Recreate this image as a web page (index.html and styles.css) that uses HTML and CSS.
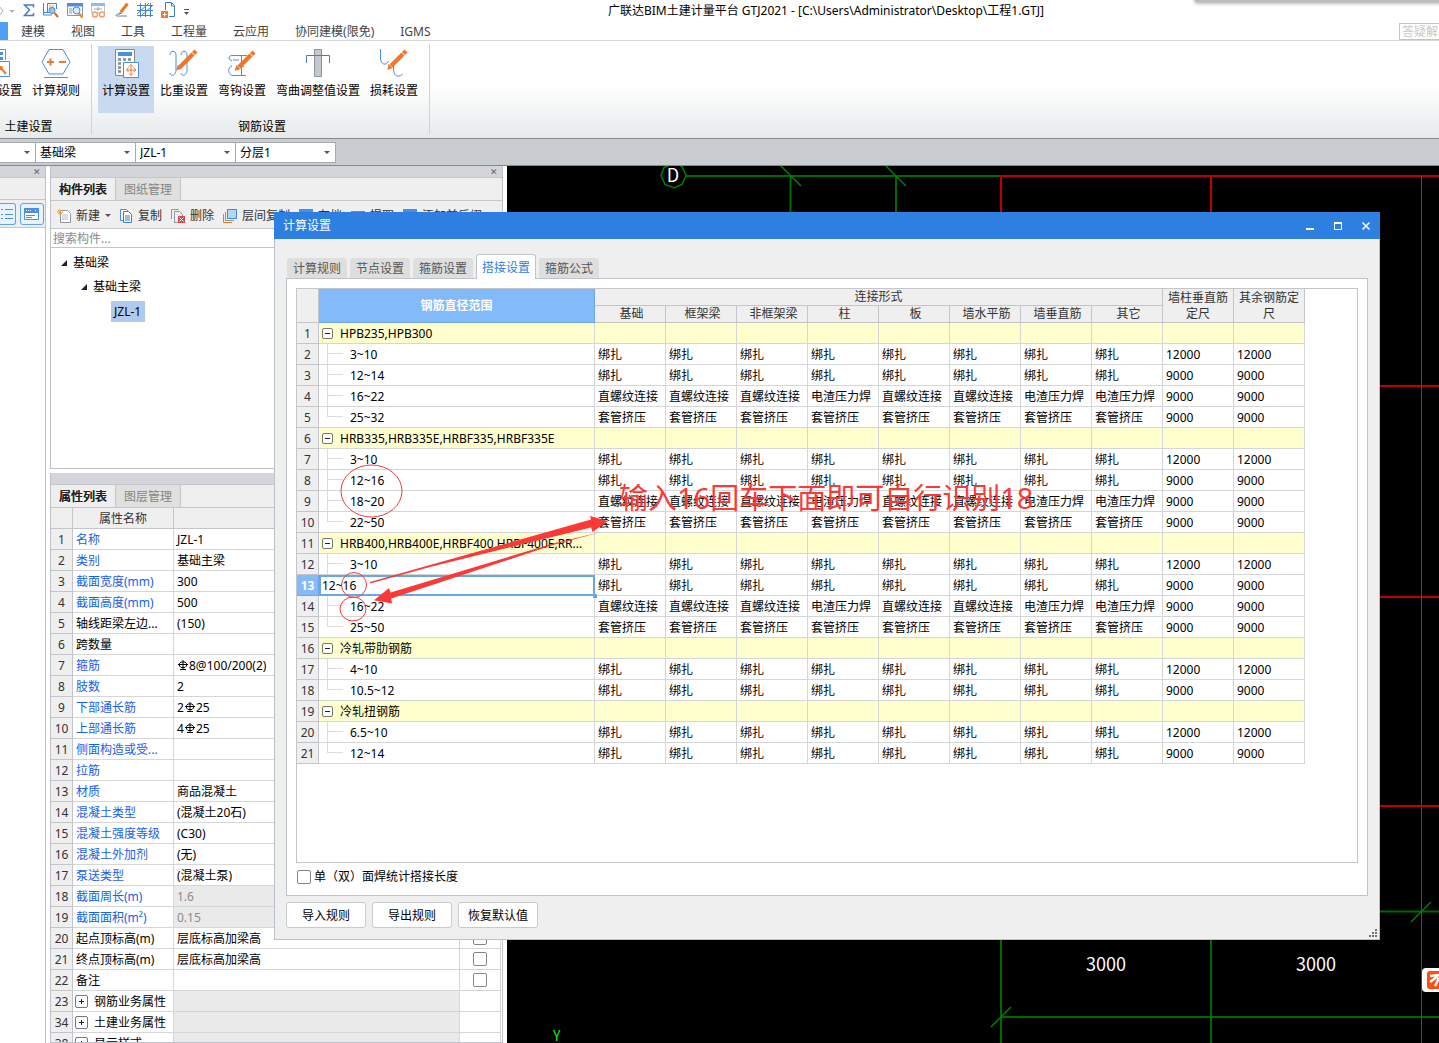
FILE: index.html
```html
<!DOCTYPE html>
<html lang="zh-CN">
<head>
<meta charset="utf-8">
<title>广联达BIM土建计量平台 GTJ2021</title>
<link rel="stylesheet" href="styles.css">
</head>
<body>
<header class="titlebar">
  <nav class="quick" aria-label="快速访问">
    <svg width="15" height="16"><path d="M-4 5l5-1M0 5l4 5-4 5" transform="translate(-1 -1)" fill="none" stroke="#aaa"/><path d="M9 8h6l-3 3z" fill="#b5b5b5"/></svg>
    <svg width="12" height="16"><path d="M10.500 5.500V3H1.500l5 5-5 5.500h9V11" fill="none" stroke="#3f7fc4" stroke-width="1.500"/></svg>
    <svg width="16" height="16"><path d="M.5 1v12H9M.5 10.500h6M4.500 10V1.500h9V7" fill="none" stroke="#3f86d8"/><path d="M6 4h6M6 6h6" stroke="#f0883a" stroke-dasharray="2 1"/><circle cx="9" cy="8.500" r="3" fill="#9cc4ee" stroke="#3f86d8"/><path d="M11.500 11l3.500 4" stroke="#d9692b" stroke-width="2"/></svg>
    <svg width="16" height="16"><path d="M.5 1.500h15v12H.5z" fill="#fff" stroke="#8796a5"/><path d="M0 1h16v3.500H0z" fill="#4a90e2"/><path d="M2 7h3M2 9h3M2 11h3" stroke="#8796a5"/><circle cx="9.500" cy="8.500" r="3.500" fill="#dcebfb" stroke="#3f86d8"/><path d="M12 11.500l3.500 4" stroke="#f08a24" stroke-width="2.500"/></svg>
    <svg width="16" height="16"><path d="M.5 1.500h13v9H.5z" fill="#fff" stroke="#bcc5ce"/><path d="M0 1h14v3H0z" fill="#8fbdf0"/><path d="M3 7h8M7 5v4" stroke="#9aa5b0"/><circle cx="4" cy="12.500" r="2.500" fill="#fff" stroke="#f2a06b" stroke-width="1.500"/><circle cx="11" cy="12.500" r="2.500" fill="#fff" stroke="#f2a06b" stroke-width="1.500"/></svg>
    <svg width="14" height="16"><path d="M12.500 1.500L6 10" stroke="#f0762a" stroke-width="3"/><path d="M6 9l-2 3 3-1M4 12c-3 0-4 2-2 2h10" fill="none" stroke="#70808e"/></svg>
    <svg width="16" height="16"><path d="M3.500 1v14M8.500 1v14M13.500 1v14M0 3.500h16M0 8.500h16M0 13.500h16M0 12L12 1M3 15L15 4" fill="none" stroke="#3f86d8"/></svg>
    <svg width="14" height="16"><path d="M4.500 8V.5h6l3 3v11H8M10.500 1v3h3" fill="none" stroke="#3f7fc4"/><path d="M0 9h7v7H0z" fill="#f0762a"/><path d="M1.500 12.500h4M3.500 10.500v4" stroke="#fff"/></svg>
    <svg width="8" height="16"><path d="M1 7.500h5" stroke="#555"/><path d="M1 10h5L3.500 13z" fill="#555"/></svg>
  </nav>
  <h1 class="app-title">广联达BIM土建计量平台 GTJ2021 - [C:\Users\Administrator\Desktop\工程1.GTJ]</h1>
</header>

<nav class="menu">
  <span class="menu-current"></span>
  <a href="#">建模</a><a href="#">视图</a><a href="#">工具</a><a href="#">工程量</a><a href="#">云应用</a><a href="#">协同建模(限免)</a><a href="#">IGMS</a>
  <input class="help-search" aria-label="答疑" placeholder="答疑解惑">
</nav>

<section class="ribbon">
  <div class="group group-civil">
    <div class="tools">
      <button class="tool tool-cut"><svg width="14" height="30"><path d="M-6 1.500H7.500V12" fill="none" stroke="#7f8c96"/><path d="M2 4h3v3H2zM2 9h3v3H2z" fill="#4a90e2"/><path d="M-4 13.500h15.500v15H-4" fill="#fff" stroke="#4a90e2"/><path d="M2 19l6 7" stroke="#f0762a" stroke-width="2"/><circle cx="3" cy="20" r="2" fill="#f0762a"/></svg>设置</button>
      <button class="tool"><svg width="30" height="30"><path d="M8 1.500h14l7 12.500-7 12H8L1 14zM3 29.500h24" fill="none" stroke="#4a90e2"/><path d="M6 14h7M9.500 10.500v7M18 14h7" stroke="#f0762a" stroke-width="2"/></svg>计算规则</button>
    </div>
    <div class="caption">土建设置</div>
  </div>
  <div class="group group-rebar">
    <div class="tools">
      <button class="tool selected"><svg width="30" height="30"><path d="M4.500 1.500h19v26h-19z" fill="#fff" stroke="#7f8c96"/><path d="M7 4h14v4H7z" fill="#4a90e2"/><path d="M7 11.500h15M7 15.500h15M7 19.500h15M7 23.500h15" stroke="#7f8c96" stroke-width="2.500" stroke-dasharray="3 2"/><path d="M12.500 14.500h15v15h-15z" fill="#fff" stroke="#4a90e2"/><path d="M20 17v10M16 22h9M17.500 19.500L15.500 22l2 2M22.500 19.500l2.500 2.500-2.500 2M18 18.500l2-2 2 2M18 25.500l2 2 2-2" fill="none" stroke="#f0762a"/></svg>计算设置</button>
      <button class="tool"><svg width="30" height="30"><path d="M1 7c0-5 6-5 6 0v15c0 6-6 7-6 3M12 7c0-5 6-5 6 0v15c0 6-6 7-6 3" fill="none" stroke="#4a90e2"/><path d="M27 3L11 19" stroke="#f0762a" stroke-width="4.500"/><path d="M9 16.500l4 4-6 2z" fill="#f0762a"/><path d="M22.500 4l4 4" stroke="#fff"/></svg>比重设置</button>
      <button class="tool"><svg width="30" height="30"><path d="M20 7.500H5c-4 0-4 5 0 5M5 18c-4 0-5 9 1 9.500h13M14.500 8v19M12 18.500h5M6 12h6" fill="none" stroke="#4a90e2"/><path d="M27 4L12 19" stroke="#f0762a" stroke-width="4.500"/><path d="M9.500 17l4 4-6 2z" fill="#f0762a"/><path d="M22.500 5l4 4" stroke="#fff"/></svg>弯钩设置</button>
      <button class="tool"><svg width="30" height="30"><path d="M11.500 1.500h7v27h-7z" fill="#c3c9ce" stroke="#89939b"/><path d="M3.500 15V7.500h23V15" fill="none" stroke="#3f7fc4"/></svg>弯曲调整值设置</button>
      <button class="tool"><svg width="30" height="30"><path d="M1.500 1v9c0 7 6 8 8 3M14.500 13v8c0 9 7 8 9 5" fill="none" stroke="#4a90e2"/><path d="M27 3L12 18" stroke="#f0762a" stroke-width="4.500"/><path d="M9.500 16l4 4-5 2z" fill="#f0762a"/><path d="M22.500 4l4 4" stroke="#fff"/></svg>损耗设置</button>
    </div>
    <div class="caption">钢筋设置</div>
  </div>
</section>

<section class="filters">
  <span class="pick pick-first"><select aria-label="楼层"><option></option></select></span>
  <span class="pick"><select aria-label="构件类型"><option>基础梁</option></select></span>
  <span class="pick"><select aria-label="构件"><option>JZL-1</option></select></span>
  <span class="pick"><select aria-label="分层"><option>分层1</option></select></span>
</section>

<main class="work">
  <aside class="stub">
    <div class="dock"><button class="dock-close" aria-label="关闭">✕</button></div>
    <div class="stub-gap"></div>
    <div class="stub-tools">
      <button class="view-btn view-cut" aria-label="列表"><svg width="14" height="14"><path d="M0 2.500h2M4 2.500h8M0 7.500h2M4 7.500h8M0 11.500h2M4 11.500h8" stroke="#4a90e2"/></svg></button>
      <button class="view-btn" aria-label="窗口"><svg width="16" height="14"><path d="M.5 1.500h14v11H.5z" fill="#fff" stroke="#4a90e2"/><path d="M0 1h15v5H0z" fill="#4a90e2"/><path d="M2 3.500h6M11 3.500h2" stroke="#fff" stroke-dasharray="1 1"/><path d="M2 8.500h9M2 10.500h6" stroke="#4a90e2"/></svg></button>
    </div>
  </aside>

  <div class="panels">
    <section class="panel panel-tree">
      <div class="dock"><button class="dock-close" aria-label="关闭">✕</button></div>
      <div class="tabs"><button class="tab on">构件列表</button><button class="tab">图纸管理</button></div>
      <div class="toolbar">
        <button><svg width="14" height="14"><path d="M3.500 1.500h7l3 3v9h-10z" fill="#fff" stroke="#8d979f"/><path d="M5 6h6M5 8h6M5 10h6" stroke="#b5bcc2"/><path d="M0 3h6M3 0v6M1 1l4 4M5 1L1 5" stroke="#f0a030"/></svg>新建<i class="caret"></i></button>
        <button><svg width="14" height="14"><path d="M1.500.5h6l2 2v9h-8z" fill="#fff" stroke="#4a90e2"/><path d="M4.500 2.500h5l3 3v8h-8z" fill="#fff" stroke="#3f7fc4"/><path d="M6 7h5M6 9h5M6 11h5" stroke="#3f7fc4"/></svg>复制</button>
        <button><svg width="14" height="14"><path d="M.5 10V.5h7M3.500 13V2.500h5l3 3V7M3 13.500h4" fill="none" stroke="#8d979f"/><path d="M7 7h7v7H7z" fill="#d9474b"/><path d="M8.500 8.500l4 4M12.500 8.500l-4 4" stroke="#fff"/></svg>删除</button>
        <button><svg width="14" height="14"><path d="M.5 5v8.500H9" fill="none" stroke="#f0762a"/><path d="M2.500 3v8.500H11" fill="none" stroke="#8d979f"/><path d="M4.500.5h9v9h-9z" fill="#b5d6f7" stroke="#3f86d8"/></svg>层间复制</button>
        <button><svg width="14" height="14"><path d="M.5.500h13v13H.5z" fill="#fff" stroke="#4a90e2"/><path d="M0 0h14v3H0z" fill="#4a90e2"/></svg>存档</button>
        <button><svg width="14" height="14"><path d="M0 2h14v10H0z" fill="#4a90e2"/></svg>提取</button>
        <button><svg width="14" height="14"><path d="M.5.500h13v13H.5z" fill="#fff" stroke="#4a90e2"/><path d="M0 0h14v3H0z" fill="#4a90e2"/></svg>添加前后缀</button>
      </div>
      <input class="search" aria-label="搜索构件" placeholder="搜索构件...">
      <ul class="tree">
        <li class="t1"><i class="open"></i>基础梁</li>
        <li class="t2"><i class="open"></i>基础主梁</li>
        <li class="t3"><span class="picked">JZL-1</span></li>
      </ul>
    </section>

    <section class="panel panel-props">
      <div class="dock"></div>
      <div class="tabs"><button class="tab on">属性列表</button><button class="tab">图层管理</button></div>
      <table class="grid props">
        <colgroup><col class="c-num"><col class="c-name"><col><col class="c-add"></colgroup>
        <tr><th><th>属性名称<th><th>
        <tr><th>1<td class="key">名称<td>JZL-1<td>
        <tr><th>2<td class="key">类别<td>基础主梁<td>
        <tr><th>3<td class="key">截面宽度(mm)<td>300<td>
        <tr><th>4<td class="key">截面高度(mm)<td>500<td>
        <tr><th>5<td>轴线距梁左边...<td>(150)<td>
        <tr><th>6<td>跨数量<td><td>
        <tr><th>7<td class="key">箍筋<td><svg class="bar" width="12" height="11"><path d="M6 0v10M2.500 6V3.500l1.500-1.500h4l1.500 1.500V6L8 7.500H4zM1 4.500h10M3 9.500h6" fill="none" stroke="#000"/></svg>8@100/200(2)<td>
        <tr><th>8<td class="key">肢数<td>2<td>
        <tr><th>9<td class="key">下部通长筋<td>2<svg class="bar" width="12" height="11"><path d="M6 0v10M2.500 6V3.500l1.500-1.500h4l1.500 1.500V6L8 7.500H4zM1 4.500h10M3 9.500h6" fill="none" stroke="#000"/></svg>25<td>
        <tr><th>10<td class="key">上部通长筋<td>4<svg class="bar" width="12" height="11"><path d="M6 0v10M2.500 6V3.500l1.500-1.500h4l1.500 1.500V6L8 7.500H4zM1 4.500h10M3 9.500h6" fill="none" stroke="#000"/></svg>25<td>
        <tr><th>11<td class="key">侧面构造或受...<td><td>
        <tr><th>12<td class="key">拉筋<td><td>
        <tr><th>13<td class="key">材质<td>商品混凝土<td>
        <tr><th>14<td class="key">混凝土类型<td>(混凝土20石)<td>
        <tr><th>15<td class="key">混凝土强度等级<td>(C30)<td>
        <tr><th>16<td class="key">混凝土外加剂<td>(无)<td>
        <tr><th>17<td class="key">泵送类型<td>(混凝土泵)<td>
        <tr><th>18<td class="key">截面周长(m)<td class="off">1.6<td>
        <tr><th>19<td class="key">截面面积(m²)<td class="off">0.15<td>
        <tr><th>20<td>起点顶标高(m)<td>层底标高加梁高<td class="tick"><input type="checkbox" aria-label="附加 起点顶标高">
        <tr><th>21<td>终点顶标高(m)<td>层底标高加梁高<td class="tick"><input type="checkbox" aria-label="附加 终点顶标高">
        <tr><th>22<td>备注<td><td class="tick"><input type="checkbox" aria-label="附加 备注">
        <tr><th>23<td class="fold"><button class="exp plus" aria-label="展开"></button>钢筋业务属性<td class="off"><td>
        <tr><th>34<td class="fold"><button class="exp plus" aria-label="展开"></button>土建业务属性<td class="off"><td>
        <tr><th>38<td class="fold"><button class="exp plus" aria-label="展开"></button>显示样式<td class="off"><td>
      </table>
    </section>
  </div>

  <section class="canvas">
    <svg class="drawing" width="932" height="877" viewBox="507 166 932 877">
      <g fill="none" stroke="#006800" stroke-width="2">
        <path d="M686 176H1000M790.500 176V300M896 176V300M1001 800V1043M1211 800V1043M1300 911.500H1439M1001 1017H1439"/>
      </g>
      <g fill="none" stroke="#008000">
        <path d="M1421.500 806V1043"/>
        <path stroke-width="1.500" d="M780 165l21 21M885 165l21 21M991 1027l20-20M1411 922l20-20M664 167.500l-3 8 4 9 9 3.500 8-3.500 4-9-4-9-8-3.500z"/>
      </g>
      <g fill="none" stroke="#c00000" stroke-width="2">
        <path d="M1000 176H1439M1001 176V300M1211 176V300M1300 386H1439M1300 597H1439M1300 806H1439"/>
        <path stroke="#f00" stroke-width="1" d="M1421.500 176V806"/>
      </g>
      <g class="dims" fill="#fff" text-anchor="middle">
        <text x="673" y="182">D</text><text x="1106" y="971">3000</text><text x="1316" y="971">3000</text>
      </g>
      <text class="axis" x="553" y="1041" fill="#0f0">Y</text>
      <rect x="1422" y="968" width="30" height="24" rx="4" fill="#fff"/>
      <rect x="1427" y="971" width="20" height="18" rx="3" fill="#fb5012"/>
      <path d="M1430 976l9-1M1430 982l8-6M1435 986l4-8" stroke="#fff" stroke-width="2.500" fill="none"/>
    </svg>
  </section>
</main>
<div class="upper-window"></div>

<section class="dialog" role="dialog" aria-label="计算设置">
  <div class="dlg-title"><h2>计算设置</h2>
    <button aria-label="最小化"><svg width="10" height="10"><path d="M1 8h8" stroke="#fff" stroke-width="2"/></svg></button>
    <button aria-label="最大化"><svg width="10" height="10"><path d="M1.500 2v6.500h7V2M1 2.500h8" stroke="#fff" fill="none"/><path d="M1 2h8" stroke="#fff" stroke-width="2"/></svg></button>
    <button aria-label="关闭"><svg width="10" height="10"><path d="M1.500 1.500l7 7M8.500 1.500l-7 7" stroke="#fff" stroke-width="1.500"/></svg></button>
  </div>
  <div class="dlg-body">
    <div class="dlg-tabs"><button>计算规则</button><button>节点设置</button><button>箍筋设置</button><button class="on">搭接设置</button><button>箍筋公式</button></div>
    <div class="sheet">
      <div class="table-box">
        <table class="grid laps">
          <colgroup><col class="c-num"><col class="c-range"><col span="10"></colgroup>
          <thead>
            <tr><th rowspan="2"><th rowspan="2" class="hot">钢筋直径范围<th colspan="8">连接形式<th rowspan="2" class="wrap">墙柱垂直筋定尺<th rowspan="2" class="wrap">其余钢筋定尺
            <tr class="sub"><th>基础<th>框架梁<th>非框架梁<th>柱<th>板<th>墙水平筋<th>墙垂直筋<th>其它
          <tbody>
            <tr class="head"><th>1<td><button class="exp" aria-label="折叠"></button>HPB235,HPB300<td><td><td><td><td><td><td><td><td><td>
            <tr><th>2<td class="leaf">3~10<td>绑扎<td>绑扎<td>绑扎<td>绑扎<td>绑扎<td>绑扎<td>绑扎<td>绑扎<td>12000<td>12000
            <tr><th>3<td class="leaf">12~14<td>绑扎<td>绑扎<td>绑扎<td>绑扎<td>绑扎<td>绑扎<td>绑扎<td>绑扎<td>9000<td>9000
            <tr><th>4<td class="leaf">16~22<td>直螺纹连接<td>直螺纹连接<td>直螺纹连接<td>电渣压力焊<td>直螺纹连接<td>直螺纹连接<td>电渣压力焊<td>电渣压力焊<td>9000<td>9000
            <tr><th>5<td class="leaf last">25~32<td>套管挤压<td>套管挤压<td>套管挤压<td>套管挤压<td>套管挤压<td>套管挤压<td>套管挤压<td>套管挤压<td>9000<td>9000
            <tr class="head"><th>6<td><button class="exp" aria-label="折叠"></button>HRB335,HRB335E,HRBF335,HRBF335E<td><td><td><td><td><td><td><td><td><td>
            <tr><th>7<td class="leaf">3~10<td>绑扎<td>绑扎<td>绑扎<td>绑扎<td>绑扎<td>绑扎<td>绑扎<td>绑扎<td>12000<td>12000
            <tr><th>8<td class="leaf">12~16<td>绑扎<td>绑扎<td>绑扎<td>绑扎<td>绑扎<td>绑扎<td>绑扎<td>绑扎<td>9000<td>9000
            <tr><th>9<td class="leaf">18~20<td>直螺纹连接<td>直螺纹连接<td>直螺纹连接<td>电渣压力焊<td>直螺纹连接<td>直螺纹连接<td>电渣压力焊<td>电渣压力焊<td>9000<td>9000
            <tr><th>10<td class="leaf last">22~50<td>套管挤压<td>套管挤压<td>套管挤压<td>套管挤压<td>套管挤压<td>套管挤压<td>套管挤压<td>套管挤压<td>9000<td>9000
            <tr class="head"><th>11<td><button class="exp" aria-label="折叠"></button>HRB400,HRB400E,HRBF400,HRBF400E,RR...<td><td><td><td><td><td><td><td><td><td>
            <tr><th>12<td class="leaf">3~10<td>绑扎<td>绑扎<td>绑扎<td>绑扎<td>绑扎<td>绑扎<td>绑扎<td>绑扎<td>12000<td>12000
            <tr><th class="hot">13<td class="edit"><input aria-label="钢筋直径范围" value="12~16"><td>绑扎<td>绑扎<td>绑扎<td>绑扎<td>绑扎<td>绑扎<td>绑扎<td>绑扎<td>9000<td>9000
            <tr><th>14<td class="leaf">16~22<td>直螺纹连接<td>直螺纹连接<td>直螺纹连接<td>电渣压力焊<td>直螺纹连接<td>直螺纹连接<td>电渣压力焊<td>电渣压力焊<td>9000<td>9000
            <tr><th>15<td class="leaf last">25~50<td>套管挤压<td>套管挤压<td>套管挤压<td>套管挤压<td>套管挤压<td>套管挤压<td>套管挤压<td>套管挤压<td>9000<td>9000
            <tr class="head"><th>16<td><button class="exp" aria-label="折叠"></button>冷轧带肋钢筋<td><td><td><td><td><td><td><td><td><td>
            <tr><th>17<td class="leaf">4~10<td>绑扎<td>绑扎<td>绑扎<td>绑扎<td>绑扎<td>绑扎<td>绑扎<td>绑扎<td>12000<td>12000
            <tr><th>18<td class="leaf last">10.5~12<td>绑扎<td>绑扎<td>绑扎<td>绑扎<td>绑扎<td>绑扎<td>绑扎<td>绑扎<td>9000<td>9000
            <tr class="head"><th>19<td><button class="exp" aria-label="折叠"></button>冷轧扭钢筋<td><td><td><td><td><td><td><td><td><td>
            <tr><th>20<td class="leaf">6.5~10<td>绑扎<td>绑扎<td>绑扎<td>绑扎<td>绑扎<td>绑扎<td>绑扎<td>绑扎<td>12000<td>12000
            <tr><th>21<td class="leaf last">12~14<td>绑扎<td>绑扎<td>绑扎<td>绑扎<td>绑扎<td>绑扎<td>绑扎<td>绑扎<td>9000<td>9000
        </table>
      </div>
      <label class="check"><input type="checkbox">单（双）面焊统计搭接长度</label>
    </div>
    <div class="actions"><button>导入规则</button><button>导出规则</button><button>恢复默认值</button></div>
  </div>
  <svg class="grip" width="9" height="9" fill="#70757c"><path d="M7 1h2v2H7zM4 4h2v2H4zM7 4h2v2H7zM1 7h2v2H1zM4 7h2v2H4zM7 7h2v2H7z"/></svg>
  <svg class="marks" width="350" height="170" viewBox="330 460 350 170">
    <path d="M593 594h4v4h-4z" fill="#6aa7e6"/>
    <g fill="none" stroke="#f23c3c"><ellipse cx="371.500" cy="491" rx="30.500" ry="26"/><circle cx="354" cy="585" r="12.500"/><ellipse cx="353" cy="609" rx="13" ry="12"/></g>
    <path fill="#fb3a37" d="M370 583.500l60-16.500 161-39.500 1.500 4.500 15.500-11-18-5 1 3.500L430 565 370 582zM603 531.500l-50 12-162.500 49-1.500-4.500-15 12.300 18 3.200-.8-5L553 545z"/>
  </svg>
  <p class="note">输入16回车下面即可自行识别18</p>
</section>
</body>
</html>
```
FILE: styles.css
```css
* { box-sizing: border-box; }
body {
  margin: 0;
  height: 100vh;
  display: flex;
  flex-direction: column;
  position: relative;
  overflow: hidden;
  background: #fff;
  color: #000;
  font: 12px/20px "Noto Sans", "Noto Sans CJK SC", sans-serif;
}
button, input, select { font: inherit; color: inherit; margin: 0; padding: 0; border: 0; background: none; border-radius: 0; }
h1, h2, p, ul { margin: 0; padding: 0; font: inherit; list-style: none; }
svg { display: block; flex: none; }
a { color: inherit; text-decoration: none; }
input::placeholder { color: #8a8a8a; opacity: 1; }

.titlebar { display: flex; height: 20px; flex: none; }
.quick { display: flex; gap: 8px; padding-top: 2px; }
.app-title { flex: 1; padding-left: 22px; text-align: center; line-height: 22px; white-space: nowrap; }

.menu { display: flex; height: 21px; flex: none; border-bottom: 1px solid #d5d7d9; color: #444; line-height: 23px; }
.menu a { padding: 0 13px; }
.menu-current { width: 8px; margin-top: 2px; background: #4da0f5; }
.help-search { width: 60px; height: 17px; margin: 3px -20px 0 auto; padding-left: 2px; border: 1px solid #c4c4c4; }
.help-search::placeholder { color: #c8c8c8; }

.ribbon { display: flex; height: 98px; flex: none; background: linear-gradient(#fff 45%, #e6eaeb); border-bottom: 1px solid #85898c; }
.group { display: flex; flex-direction: column; margin: 3px 0 4px; padding-top: 2px; border-right: 1px solid #cfd3d6; }
.group-civil { width: 92px; padding-right: 7px; }
.group-civil .caption { padding-right: 27px; }
.group-rebar { padding-left: 6px; padding-right: 7px; }
.tools { display: flex; gap: 2px; height: 67px; }
.tool { display: flex; flex-direction: column; align-items: center; gap: 3px; height: 67px; padding: 2px 4px; white-space: nowrap; line-height: 20px; }
.tool-cut { width: 28px; margin-left: -2px; align-items: flex-start; padding-left: 0; }
.selected { background: #c8d9f0; }
.caption { padding-top: 4px; text-align: center; line-height: 20px; }
.group-rebar .caption { padding-left: 4px; }

.filters { display: flex; height: 27px; flex: none; padding-top: 3px; background: #c9cdd1; border-bottom: 1px solid #85898c; }
.pick { position: relative; width: 100px; height: 21px; }
.pick-first { width: 36px; }
.pick select { appearance: none; width: 100%; height: 100%; padding-left: 4px; border: 1px solid #a7abaf; border-left-width: 0; background: #fff; }
.pick::after, .caret { content: ""; width: 0; height: 0; border: 3px solid transparent; border-top-color: #555; border-bottom-width: 0; }
.pick::after { position: absolute; right: 6px; top: 9px; pointer-events: none; }

.work { display: flex; flex: 1; min-height: 0; }
.dock { display: flex; justify-content: flex-end; height: 12px; flex: none; background: #d4d5da; border-bottom: 1px solid #c3c6cb; }
.dock-close { width: 17px; font-size: 9px; line-height: 12px; color: #666; }
.stub { width: 46px; border-right: 1px solid #c0c2c8; }
.stub-gap { height: 22px; background: #efefef; border-bottom: 1px solid #c3c6cb; }
.stub-tools { display: flex; gap: 4px; height: 28px; padding-top: 3px; background: #efefef; border-bottom: 1px solid #c3c6cb; }
.view-btn { display: flex; align-items: center; justify-content: center; width: 24px; height: 22px; border: 1px solid #5aa4f0; border-radius: 3px; background: #e9f3fe; }
.view-cut { width: 16px; border-left: 0; border-radius: 0 3px 3px 0; }

.panels { display: flex; flex-direction: column; gap: 4px; width: 453px; margin-left: 4px; min-height: 0; }
.panel { border: 1px solid #c0c2c8; border-top: 0; }
.panel-tree { display: flex; flex-direction: column; height: 303px; flex: none; }
.panel-props { flex: 1; min-height: 0; overflow: hidden; padding-right: 1px; }
.tabs { display: flex; height: 23px; background: #efefef; border-bottom: 1px solid #c3c6cb; }
.tab { padding: 2px 8px 0; border-right: 1px solid #c3c6cb; background: #e0e0e0; color: #858585; line-height: 20px; }
.tab.on { background: #efefef; color: #222; font-weight: 500; text-shadow: 0 0 #222; }
.toolbar { display: flex; gap: 9px; height: 28px; flex: none; padding: 2px 0 0 6px; background: #efefef; border-bottom: 1px solid #c3c6cb; color: #333; overflow: hidden; }
.toolbar button { display: flex; align-items: center; gap: 5px; flex: none; white-space: nowrap; }
.toolbar .caret { margin: 0 -1px 0 0; }
.search { width: 100%; height: 19px; padding: 1px 0 0 2px; border-bottom: 1px solid #c3c6cb; flex: none; }
.tree { padding-top: 3px; line-height: 24px; }
.tree li { display: flex; align-items: center; gap: 6px; height: 24px; }
.t1 { padding-left: 10px; } .t2 { padding-left: 30px; } .t3 { padding-left: 60px; }
.open { border: 3px solid transparent; border-right-color: #222; border-bottom-color: #222; }
.picked { padding: 0 4px 0 3px; line-height: 21px; background: #b0caec; }

.grid { table-layout: fixed; border-spacing: 0; }
.grid th, .grid td { height: 21px; padding: 2px 0 0 3px; border: solid #d5d6d8; border-width: 0 1px 1px 0; line-height: 18px; text-align: left; font-weight: 400; white-space: nowrap; overflow: hidden; }
.grid th { padding: 2px 0 0; border-color: #c3c5c8; background: #efefef; color: #333; text-align: center; }
.c-num { width: 22px; }
.props { width: 100%; }
.c-name { width: 101px; } .c-add { width: 41px; }
.grid .key { color: #1760ee; }
.grid .off { background: #eaeaea; color: #8a8a8a; }
.bar { display: inline-block; vertical-align: -1px; }
.grid .tick { padding: 0; text-align: center; }
input[type=checkbox] { appearance: none; width: 14px; height: 14px; border: 1px solid #858585; border-radius: 2px; background: #fff; flex: none; }
.tick input { display: block; margin: 0 auto; }
.exp { display: inline-block; width: 11px; height: 11px; margin: 0 7px 0 0; border: 1px solid #777; border-radius: 2px; vertical-align: 0; background: linear-gradient(#222, #222) center / 5px 1px no-repeat #fff; }
.fold .exp { width: 13px; height: 13px; margin-right: 6px; margin-left: -1px; vertical-align: -1px; }
.plus { background: linear-gradient(#222, #222) center / 5px 1px no-repeat, linear-gradient(#222, #222) center / 1px 5px no-repeat #fff; }

.canvas { flex: 1; margin-left: 4px; min-width: 0; overflow: hidden; background: #000; }
.dims { font-family: "Noto Sans CJK SC", sans-serif; font-size: 18px; }
.axis { font-family: "Noto Sans CJK SC", sans-serif; font-size: 14px; }
.upper-window { position: absolute; top: -8px; right: -10px; width: 254px; height: 10px; background: #bbb; box-shadow: 0 1px 4px #999; }

.dialog { position: absolute; left: 274px; top: 212px; width: 1106px; border: solid #b9c1cd; border-width: 0 1px 1px; background: #efefef; }
.dlg-title { display: flex; height: 27px; margin: 0 -1px; padding-left: 9px; background: #2d80e2; color: #fff; }
.dlg-title h2 { flex: 1; line-height: 27px; }
.dlg-title button { display: flex; align-items: center; justify-content: center; width: 28px; }
.dlg-body { padding: 15px 11px 11px; }
.dlg-tabs { display: flex; align-items: flex-end; gap: 3px; height: 25px; margin-bottom: -1px; padding-left: 1px; position: relative; }
.dlg-tabs button { width: 60px; height: 20px; margin-bottom: 1px; padding-top: 1px; border-radius: 3px 3px 0 0; background: #dedede; color: #555; }
.dlg-tabs .on { height: 25px; margin-bottom: 0; border: 1px solid #bfc4ca; border-bottom: 0; background: #fff; color: #2d80e2; }
.sheet { padding: 9px 9px 4px; border: 1px solid #bfc4ca; background: #fff; }
.table-box { min-height: 575px; border: 1px solid #c3c5c8; }
.laps { width: 1008px; }
.c-range { width: 276px; }
.grid thead th { height: 17px; padding: 0 3px; line-height: 16px; }
.grid thead .wrap { line-height: 16px; white-space: normal; }
.grid thead .sub th { padding: 0 0 0 3px; }
.grid .hot { background: #82bafa; border-color: #6aa7e6; color: #fff; font-weight: 700; }
.head td { background: #ffffcd; }
.grid .leaf {
  padding-left: 31px;
  background: linear-gradient(#dcdcdc, #dcdcdc) 8px 9px / 16px 1px no-repeat, linear-gradient(#dcdcdc, #dcdcdc) 8px 0 / 1px 20px no-repeat;
}
.grid .last { background-size: 16px 1px, 1px 10px; }
.grid .edit { padding: 0; border: 0; }
.edit input { display: block; width: 100%; height: 21px; padding-left: 1px; border: 2px solid #6aa7e6; }
.check { display: flex; align-items: center; gap: 3px; height: 28px; padding-left: 1px; }
.actions { display: flex; gap: 6px; margin-top: 6px; }
.actions button { width: 80px; height: 26px; padding-top: 2px; border: 1px solid #c8cacc; border-radius: 3px; background: #fff; }
.grip { position: absolute; right: 2px; bottom: 2px; }
.marks { position: absolute; left: 55px; top: 248px; pointer-events: none; }
.note { position: absolute; left: 344px; top: 268px; color: #fb3a37; font-size: 29px; line-height: 36px; white-space: nowrap; pointer-events: none; }
```
